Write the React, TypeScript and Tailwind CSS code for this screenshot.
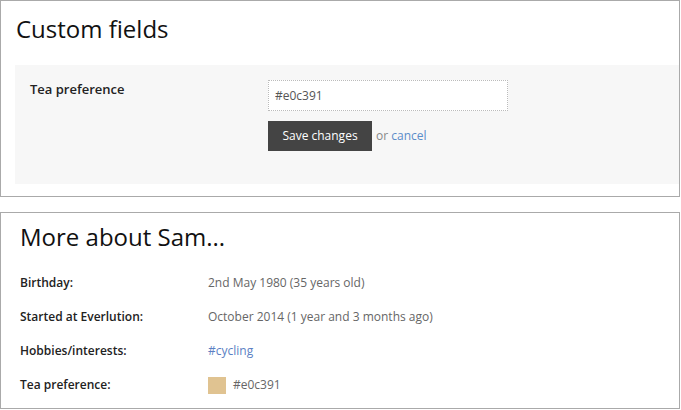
const rows = [
  { label: 'Birthday:', value: '2nd May 1980 (35 years old)' },
  { label: 'Started at Everlution:', value: 'October 2014 (1 year and 3 months ago)' },
  { label: 'Hobbies/interests:', value: '#cycling', link: true },
  { label: 'Tea preference:', value: '#e0c391', swatch: '#e0c391' },
];

export default function App() {
  return (
    <div className="w-[681px] h-[410px] bg-white text-[#222] font-['Open_Sans',sans-serif]">
      <div className="w-[680px] h-[197px] border border-[#aaa] flex flex-col">
        <h1 className="pl-[15px] pt-[12px] h-[64px] text-[24px] leading-[32px] font-normal text-[#111]">
          Custom fields
        </h1>
        <div className="ml-[14px] h-[119px] bg-[#f7f7f7] flex pt-[15px]">
          <div className="w-[253px] pl-[15px] text-[13px] font-semibold leading-[18px]">
            Tea preference
          </div>
          <div className="flex flex-col">
            <input
              defaultValue="#e0c391"
              className="w-[240px] h-[31px] border border-dotted border-[#bbb] bg-white px-[6px] text-[12px] text-[#555] outline-none"
            />
            <div className="flex items-center mt-[10px]">
              <button className="w-[104px] h-[30px] bg-[#444] text-white text-[12px]">Save changes</button>
              <span className="ml-[4px] text-[12px] text-[#888]">
                or <a className="text-[#5b8dc9]">cancel</a>
              </span>
            </div>
          </div>
        </div>
      </div>
      <div className="mt-[15px] w-[680px] h-[197px] border border-[#aaa]">
        <h2 className="pl-[19px] pt-[8px] h-[53px] text-[24px] leading-[32px] font-normal text-[#111]">
          More about Sam...
        </h2>
        <div className="flex flex-col">
          {rows.map((row, i) => (
            <div key={i} className="flex items-center h-[34px] pl-[19px]">
              <div className="w-[188px] text-[12px] font-semibold text-[#222]">{row.label}</div>
              {row.swatch ? (
                <div className="flex items-center">
                  <div className="w-[18px] h-[17px]" style={{ backgroundColor: row.swatch }} />
                  <span className="ml-[7px] text-[12px] text-[#666]">{row.value}</span>
                </div>
              ) : (
                <div className={`text-[12px] ${row.link ? 'text-[#5b7fc4]' : 'text-[#666]'}`}>{row.value}</div>
              )}
            </div>
          ))}
        </div>
      </div>
    </div>
  );
}
